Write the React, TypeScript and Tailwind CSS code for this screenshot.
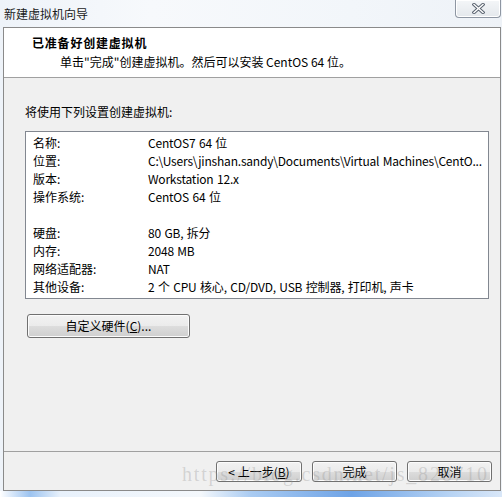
import React from 'react'

const FONT = { fontFamily: '"Noto Sans CJK SC", "Microsoft YaHei", sans-serif' }

const rows: [string, string][] = [
  ['名称:', 'CentOS7 64 位'],
  ['位置:', 'C:\\Users\\jinshan.sandy\\Documents\\Virtual Machines\\CentO...'],
  ['版本:', 'Workstation 12.x'],
  ['操作系统:', 'CentOS 64 位'],
  ['', ''],
  ['硬盘:', '80 GB, 拆分'],
  ['内存:', '2048 MB'],
  ['网络适配器:', 'NAT'],
  ['其他设备:', '2 个 CPU 核心, CD/DVD, USB 控制器, 打印机, 声卡'],
]

const btn =
  'flex items-center justify-center rounded-[3px] border border-[#707070] bg-[linear-gradient(#f2f2f2,#ebebeb_50%,#dddddd_50%,#cfcfcf)] shadow-[inset_0_0_0_1px_#fcfcfc] text-[12px] leading-none text-black'

export default function App() {
  return (
    <div
      style={FONT}
      className="relative h-[497px] w-[502px] overflow-hidden bg-[linear-gradient(90deg,#eef3f9,#f7f9fc_30%,#f2f6fa_70%,#eef2f7)] text-black"
    >
      {/* title bar */}
      <div className="flex h-[27px] items-center pl-[4px] text-[12px] leading-none text-[#1a1a1a]">
        新建虚拟机向导
      </div>
      <div className="absolute right-[1px] top-0 flex h-[18px] w-[46px] items-center justify-center rounded-b-[4px] border border-t-0 border-[#8e96a2] bg-[linear-gradient(#f4f6f8,#e4e8ec)] shadow-[inset_0_0_0_1px_#ffffff]">
        <svg width="13" height="11" viewBox="0 0 13 11">
          <path d="M2 1.5 L11 9.5 M11 1.5 L2 9.5" stroke="#5b6470" strokeWidth="3.4" strokeLinecap="square" />
          <path d="M2 1.5 L11 9.5 M11 1.5 L2 9.5" stroke="#ffffff" strokeWidth="1.4" strokeLinecap="square" />
        </svg>
      </div>

      {/* window body */}
      <div className="ml-[3px] flex h-[464px] w-[498px] flex-col border border-[#8a8a8a] bg-[#f0f0f0]">
        <div className="h-[50px] border-b border-[#a0a0a0] bg-white pl-[28px] pt-[6px]">
          <div className="text-[12px] font-bold leading-[18px] tracking-[0.8px]">已准备好创建虚拟机</div>
          <div className="mt-[1px] pl-[28px] text-[12px] leading-[18px]">
            单击"完成"创建虚拟机。然后可以安装 CentOS 64 位。
          </div>
        </div>

        <div className="flex-1 pl-[21px] pt-[25px]">
          <div className="text-[12px] leading-[18px]">将使用下列设置创建虚拟机:</div>
          <div className="mt-[10px] h-[168px] w-[464px] overflow-hidden border border-[#828790] bg-white pl-[7px] pt-[2px]">
            {rows.map(([k, v], i) => (
              <div key={i} className="flex h-[18px] items-center text-[12px] leading-[18px]">
                <span className="w-[115px] shrink-0">{k}</span>
                <span className="whitespace-nowrap tracking-[-0.2px] [word-spacing:1px]">{v}</span>
              </div>
            ))}
          </div>
          <button className={`${btn} ml-[2px] mt-[15px] h-[24px] w-[163px]`}>
            自定义硬件(<span className="underline">C</span>)...
          </button>
        </div>

        <div className="flex h-[39px] items-start gap-[10px] border-t border-[#a0a0a0] pl-[212px] pt-[9px]">
          <button className={`${btn} h-[21px] w-[86px]`}>
            &lt; 上一步(<span className="underline">B</span>)
          </button>
          <button className={`${btn} h-[21px] w-[85px]`}>完成</button>
          <button className={`${btn} h-[21px] w-[85px]`}>取消</button>
        </div>
      </div>

      {/* taskbar glow below window */}
      <div className="h-[6px] w-full bg-[linear-gradient(90deg,#ffffff,#9cc3f0_6%,#e8f1fb_12%,#f4f8fc_40%,#a9cbf2_50%,#6ea3e6_70%,#b8d4f4_90%,#d9e7f8)]" />

      {/* watermark */}
      <div
        className="pointer-events-none absolute left-[182px] top-[462px] whitespace-nowrap text-[20px] leading-[24px] tracking-[1.8px] text-[rgba(150,150,150,0.32)]"
        style={{ fontFamily: '"Liberation Serif", serif' }}
      >
        https://blog.csdn.net/js_828710
      </div>
    </div>
  )
}
